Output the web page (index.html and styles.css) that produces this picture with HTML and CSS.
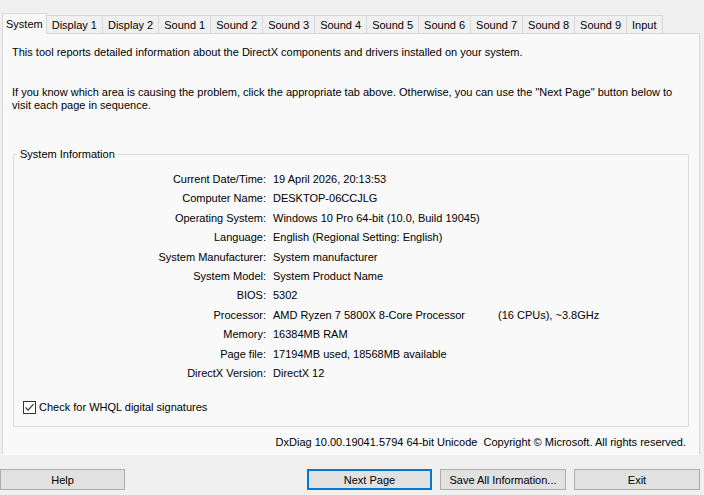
FILE: index.html
```html
<!DOCTYPE html>
<html>
<head>
<meta charset="utf-8">
<link rel="stylesheet" href="styles.css">
</head>
<body>
<div class="tabs">
  <div class="tab sel">System</div>
  <div class="tab">Display 1</div>
  <div class="tab">Display 2</div>
  <div class="tab">Sound 1</div>
  <div class="tab">Sound 2</div>
  <div class="tab">Sound 3</div>
  <div class="tab">Sound 4</div>
  <div class="tab">Sound 5</div>
  <div class="tab">Sound 6</div>
  <div class="tab">Sound 7</div>
  <div class="tab">Sound 8</div>
  <div class="tab">Sound 9</div>
  <div class="tab">Input</div>
</div>
<div class="panel">
  <p class="intro">This tool reports detailed information about the DirectX components and drivers installed on your system.</p>
  <p class="intro second">If you know which area is causing the problem, click the appropriate tab above. Otherwise, you can use the "Next Page" button below to visit each page in sequence.</p>
  <fieldset class="group">
    <legend>System Information</legend>
    <div class="rows">
      <div class="lbl">Current Date/Time:</div><div class="val">19 April 2026, 20:13:53</div>
      <div class="lbl">Computer Name:</div><div class="val">DESKTOP-06CCJLG</div>
      <div class="lbl">Operating System:</div><div class="val">Windows 10 Pro 64-bit (10.0, Build 19045)</div>
      <div class="lbl">Language:</div><div class="val">English (Regional Setting: English)</div>
      <div class="lbl">System Manufacturer:</div><div class="val">System manufacturer</div>
      <div class="lbl">System Model:</div><div class="val">System Product Name</div>
      <div class="lbl">BIOS:</div><div class="val">5302</div>
      <div class="lbl">Processor:</div><div class="val"><span class="cpu">AMD Ryzen 7 5800X 8-Core Processor</span>(16 CPUs), ~3.8GHz</div>
      <div class="lbl">Memory:</div><div class="val">16384MB RAM</div>
      <div class="lbl">Page file:</div><div class="val">17194MB used, 18568MB available</div>
      <div class="lbl">DirectX Version:</div><div class="val">DirectX 12</div>
    </div>
    <label class="check">
      <span class="box"><svg width="11" height="11" viewBox="0 0 11 11"><path d="M1.5 5.5 L4.2 8.2 L9.5 2.2" fill="none" stroke="#333" stroke-width="1.1"/></svg></span>
      Check for WHQL digital signatures
    </label>
  </fieldset>
  <div class="footer">DxDiag 10.00.19041.5794 64-bit Unicode&nbsp; Copyright © Microsoft. All rights reserved.</div>
</div>
<div class="buttons">
  <button class="btn help">Help</button>
  <div class="spacer"></div>
  <button class="btn def">Next Page</button>
  <button class="btn wide">Save All Information...</button>
  <button class="btn wide">Exit</button>
</div>
</body>
</html>
```
FILE: styles.css
```css
html, body {
  margin: 0;
  padding: 0;
}
body {
  width: 704px;
  height: 495px;
  background: #f0f0f0;
  font-family: "Liberation Sans", Arial, sans-serif;
  font-size: 11px;
  color: #000;
  overflow: hidden;
}
.tabs {
  display: flex;
  align-items: flex-end;
  padding-left: 2px;
  margin-top: 13px;
  height: 20px;
  position: relative;
  z-index: 1;
}
.tab {
  height: 18px;
  line-height: 18px;
  padding: 0 5px;
  border: 1px solid #d9d9d9;
  border-bottom: none;
  border-left: none;
  background: #f0f0f0;
  box-sizing: border-box;
  white-space: nowrap;
}
.tab.sel {
  height: 21px;
  line-height: 20px;
  margin-bottom: -1px;
  border-left: 1px solid #d9d9d9;
  background: #f9f9f9;
  padding: 0 3px;
}
.panel {
  margin: 0 4px 0 2px;
  height: 422px;
  box-sizing: border-box;
  border: 1px solid #d9d9d9;
  border-bottom-color: #ffffff;
  background: #f9f9f9;
  padding: 12px 9px 0 9px;
  display: flex;
  flex-direction: column;
}
.intro {
  margin: 0;
  line-height: 13px;
}
.intro.second {
  margin-top: 27px;
}
.group {
  margin: 36px 1px 0 1px;
  padding: 0 0 12px 0;
  border: 1px solid #dcdcdc;
  border-radius: 0;
  min-width: 0;
}
.group legend {
  margin-left: 3px;
  padding: 0 3px;
  line-height: 13px;
}
.rows {
  display: grid;
  grid-template-columns: 252px 1fr;
  column-gap: 7px;
  margin-top: 9px;
  line-height: 19.4px;
}
.lbl {
  text-align: right;
  white-space: nowrap;
}
.val {
  white-space: nowrap;
}
.cpu {
  display: inline-block;
  width: 225px;
}
.check {
  display: flex;
  align-items: center;
  margin: 18px 0 0 9px;
  line-height: 13px;
}
.box {
  width: 11px;
  height: 11px;
  border: 1px solid #333;
  background: #fff;
  margin-right: 3px;
  display: flex;
}
.footer {
  text-align: right;
  margin: 9px 4px 0 0;
  line-height: 13px;
}
.buttons {
  display: flex;
  margin-top: 14px;
  padding-right: 4px;
  gap: 8px;
}
.spacer {
  flex: 1;
}
.btn {
  height: 21px;
  width: 125px;
  background: #e1e1e1;
  border: 1px solid #adadad;
  font-family: "Liberation Sans", Arial, sans-serif;
  font-size: 11px;
  color: #000;
  padding: 0;
  margin: 0;
}
.btn.wide {
  width: 126px;
}
.btn.def {
  border: 2px solid #0078d7;
}
```
